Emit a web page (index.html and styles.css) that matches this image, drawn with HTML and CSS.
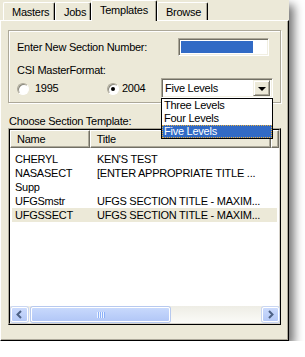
FILE: index.html
```html
<!DOCTYPE html>
<html>
<head>
<meta charset="utf-8">
<link rel="stylesheet" href="styles.css">
</head>
<body>
<div class="window">
  <div class="tabs">
    <div class="tab t-masters">Masters</div>
    <div class="tab t-jobs">Jobs</div>
    <div class="tab active t-templates">Templates</div>
    <div class="tab t-browse">Browse</div>
  </div>
  <div class="panel">
    <div class="group">
      <div class="row-number">
        <span>Enter New Section Number:</span>
        <div class="input"><div class="selection"></div></div>
      </div>
      <div class="row-format">
        <div class="format-left">
          <div class="label">CSI MasterFormat:</div>
          <div class="radios">
            <div class="radio-item"><span class="radio"></span>1995</div>
            <div class="radio-item second"><span class="radio on"></span>2004</div>
          </div>
        </div>
        <div class="combo">
          <div class="combo-text">Five Levels</div>
          <div class="combo-btn"><span class="tri"></span></div>
          <ul class="dropdown">
            <li>Three Levels</li>
            <li>Four Levels</li>
            <li class="current">Five Levels</li>
          </ul>
        </div>
      </div>
    </div>
    <div class="caption">Choose Section Template:</div>
    <div class="listview">
      <div class="lv-inner">
        <div class="lv-header">
          <div class="hcell h-name">Name</div>
          <div class="hcell h-title">Title</div>
          <div class="hcell h-tail"></div>
        </div>
        <div class="lv-rows">
          <div class="lv-row"><span class="c-name">CHERYL</span><span class="c-title">KEN'S TEST</span></div>
          <div class="lv-row"><span class="c-name">NASASECT</span><span class="c-title">[ENTER APPROPRIATE TITLE ...</span></div>
          <div class="lv-row"><span class="c-name">Supp</span><span class="c-title"></span></div>
          <div class="lv-row"><span class="c-name">UFGSmstr</span><span class="c-title">UFGS SECTION TITLE - MAXIM...</span></div>
          <div class="lv-row selected"><span class="c-name">UFGSSECT</span><span class="c-title">UFGS SECTION TITLE - MAXIM...</span></div>
        </div>
        <div class="hscroll">
          <div class="sb-btn"><svg width="9" height="9" viewBox="0 0 9 9"><path d="M6 1 L2.5 4.5 L6 8" fill="none" stroke="#4D6185" stroke-width="2"/></svg></div>
          <div class="sb-track">
            <div class="sb-thumb"><span class="grip"></span></div>
          </div>
          <div class="sb-btn"><svg width="9" height="9" viewBox="0 0 9 9"><path d="M3 1 L6.5 4.5 L3 8" fill="none" stroke="#4D6185" stroke-width="2"/></svg></div>
        </div>
      </div>
    </div>
  </div>
</div>
</body>
</html>
```
FILE: styles.css
```css
* { box-sizing: border-box; }
html, body { margin: 0; padding: 0; background: #fff; }
body {
  font-family: "Liberation Sans", Arial, sans-serif;
  font-size: 11px;
  line-height: 13px;
  letter-spacing: -0.25px;
  color: #000;
}
.window {
  width: 289px;
  height: 341px;
  background: #ECE9D8;
  box-shadow: 5px 5px 9px rgba(0, 0, 0, 0.55);
  display: flex;
  flex-direction: column;
}
.tabs {
  height: 20px;
  display: flex;
  align-items: flex-end;
  padding-left: 3px;
  position: relative;
  z-index: 1;
}
.tab {
  height: 18px;
  padding: 3px 0 0 8px;
  border-top: 1px solid #fff;
  border-left: 1px solid #fff;
  border-right: 1px solid #000;
  box-shadow: inset -1px 0 #ACA899;
  border-radius: 2px 2px 0 0;
  white-space: nowrap;
}
.t-masters { width: 52px; }
.t-jobs { width: 36px; }
.t-templates { width: 66px; }
.t-browse { width: 51px; }
.tab.active {
  height: 21px;
  margin-bottom: -1px;
  background: #ECE9D8;
  padding-top: 3px;
}
.panel {
  flex: 1;
  border-top: 1px solid #fff;
  border-left: 1px solid #fff;
  border-right: 1px solid #000;
  border-bottom: 1px solid #000;
  box-shadow: inset -1px -1px #ACA899;
  padding: 9px 7px 0 7px;
}
.group {
  height: 73px;
  border: 1px solid #ACA899;
  box-shadow: inset 1px 1px #fff, 1px 1px #fff;
  padding: 7px 11px 0 8px;
}
.row-number {
  height: 18px;
  display: flex;
  align-items: center;
  justify-content: space-between;
}
.input {
  width: 91px;
  height: 18px;
  flex-shrink: 0;
  background: #fff;
  border: 1px solid;
  border-color: #ACA899 #fff #fff #ACA899;
  box-shadow: inset 1px 1px #716F64, inset -1px -1px #F1EFE2;
  padding: 2px 0 0 2px;
}
.selection {
  width: 72px;
  height: 12px;
  background: #316AC5;
}
.row-format {
  margin-top: 8px;
  display: flex;
  justify-content: space-between;
  align-items: flex-end;
}
.radios {
  margin-top: 5px;
  display: flex;
}
.radio-item {
  display: flex;
  align-items: center;
  width: 90px;
  white-space: nowrap;
}
.radio-item.second { width: auto; }
.radio {
  width: 12px;
  height: 12px;
  flex-shrink: 0;
  border-radius: 50%;
  background: #fff;
  border: 1px solid;
  border-color: #ACA899 #fff #fff #ACA899;
  box-shadow: inset 1px 1px #8a887c;
  margin-right: 6px;
  position: relative;
}
.radio-item.second .radio { margin-right: 3px; }
.radio.on::after {
  content: "";
  position: absolute;
  left: 3px;
  top: 3px;
  width: 4px;
  height: 4px;
  border-radius: 50%;
  background: #000;
}
.combo {
  width: 112px;
  height: 20px;
  flex-shrink: 0;
  margin: 0 -4px -3px 0;
  background: #fff;
  border: 1px solid;
  border-color: #ACA899 #fff #fff #ACA899;
  box-shadow: inset 1px 1px #716F64, inset -1px -1px #F1EFE2;
  display: flex;
  align-items: center;
  padding: 0 2px 0 3px;
  position: relative;
}
.combo-text { flex: 1; white-space: nowrap; }
.combo-btn {
  width: 17px;
  height: 16px;
  flex-shrink: 0;
  background: #ECE9D8;
  border: 1px solid;
  border-color: #F1EFE2 #716F64 #716F64 #F1EFE2;
  box-shadow: inset 1px 1px #fff, inset -1px -1px #ACA899;
  display: flex;
  align-items: center;
  justify-content: center;
}
.tri {
  width: 0;
  height: 0;
  border-left: 4px solid transparent;
  border-right: 4px solid transparent;
  border-top: 4px solid #000;
  margin-top: 1px;
}
.dropdown {
  position: absolute;
  left: -1px;
  top: 19px;
  width: 112px;
  margin: 0;
  padding: 0;
  list-style: none;
  background: #fff;
  border: 1px solid #000;
  z-index: 5;
}
.dropdown li {
  height: 13px;
  padding-left: 2px;
  white-space: nowrap;
}
.dropdown li.current {
  background: #316AC5;
  color: #fff;
  outline: 1px dotted #E8B040;
  outline-offset: -1px;
}
.caption {
  margin-top: 12px;
  padding-left: 1px;
}
.listview {
  height: 197px;
  border: 1px solid;
  border-color: #ACA899 #000 #000 #ACA899;
}
.lv-inner {
  height: 100%;
  border: 1px solid;
  border-color: #000 #D4D0C8 #D4D0C8 #000;
  background: #fff;
  display: flex;
  flex-direction: column;
}
.lv-header {
  height: 18px;
  display: flex;
  background: #ECE9D8;
}
.hcell {
  height: 18px;
  border-top: 1px solid #fff;
  border-left: 1px solid #fff;
  border-right: 1px solid #716F64;
  border-bottom: 1px solid #716F64;
  box-shadow: inset -1px -1px #ACA899;
  padding: 2px 0 0 6px;
}
.h-name { width: 80px; }
.h-title { width: 182px; }
.h-tail { flex: 1; }
.lv-rows {
  flex: 1;
  padding-top: 4px;
}
.lv-row {
  height: 14px;
  margin: 0 2px;
  padding: 1px 0 0 3px;
  display: flex;
  white-space: nowrap;
}
.lv-row.selected { background: #ECE9D8; }
.c-name { width: 82px; flex-shrink: 0; }
.hscroll {
  height: 17px;
  display: flex;
  background: linear-gradient(#EEEDE5, #FBFBF8);
  padding: 1px 0 1px 1px;
}
.sb-btn {
  width: 17px;
  height: 15px;
  flex-shrink: 0;
  border: 1px solid #fff;
  border-radius: 2px;
  background: linear-gradient(#CBDAFC, #B5C9F7);
  box-shadow: 0 0 0 1px #C9D6F2;
  display: flex;
  align-items: center;
  justify-content: center;
}
.sb-track {
  flex: 1;
  padding: 0 92px 0 3px;
}
.sb-thumb {
  height: 15px;
  border: 1px solid #fff;
  border-radius: 2px;
  background: linear-gradient(#C8D9FC, #B2C7F7);
  box-shadow: 0 0 0 1px #B7C9EF;
  display: flex;
  align-items: center;
  justify-content: center;
}
.grip {
  width: 8px;
  height: 6px;
  background: repeating-linear-gradient(90deg, #EEF4FE 0 1px, #8CB0F8 1px 2px);
}
```
